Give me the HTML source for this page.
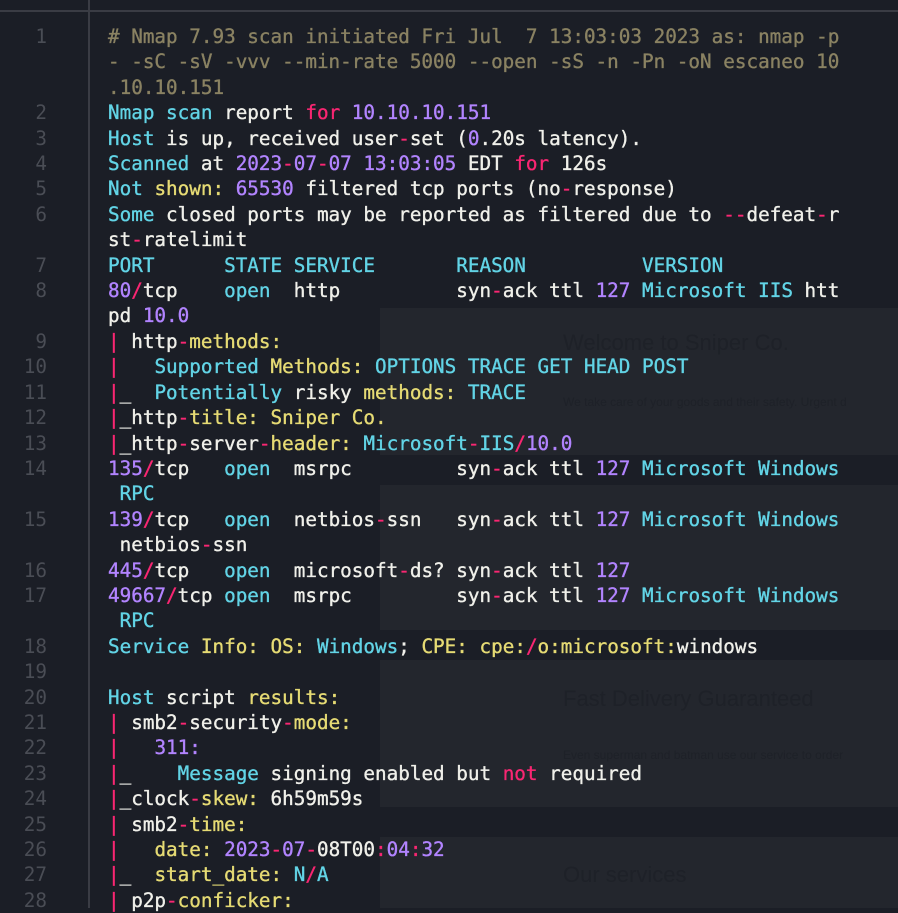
<!DOCTYPE html>
<html><head><meta charset="utf-8"><style>
html,body{margin:0;padding:0;width:898px;height:908px;overflow:hidden;background:#1b1e26}
.bg{position:absolute;left:380px;width:518px;background:#23262d}
.hl{position:absolute;left:0;top:10px;width:898px;height:2px;background:#3a3c44}
.vl{position:absolute;left:88px;top:0;width:2px;height:908px;background:#3a3c44}
.web{position:absolute;font-family:"Liberation Sans",sans-serif;color:#1e2128}
#g{position:absolute;left:0;top:24px;width:47px;text-align:right;font:19.3px/25.4px "DejaVu Sans Mono",monospace;color:#4a4d55;white-space:pre}
#c{position:absolute;left:108px;top:24px;font:19.3px/25.4px "DejaVu Sans Mono",monospace;color:#f0f0ea;white-space:pre;-webkit-text-stroke:0.35px currentColor}
.m{color:#8a8262}.c{color:#62d4e6}.p{color:#f92672}.v{color:#b284ff}.y{color:#e6db74}
</style></head><body>
<div class="bg" style="top:308px;height:147px"></div>
<div class="bg" style="top:485px;height:145px"></div>
<div class="bg" style="top:660px;height:147px"></div>
<div class="bg" style="top:837px;height:71px"></div>
<div class="web" style="left:563px;top:330px;font-size:22px">Welcome to Sniper Co.</div>
<div class="web" style="left:563px;top:395px;font-size:12px">We take care of your goods and their safety. Urgent d</div>
<div class="web" style="left:563px;top:686px;font-size:22px">Fast Delivery Guaranteed</div>
<div class="web" style="left:563px;top:748px;font-size:12px">Even superman and batman use our service to order</div>
<div class="web" style="left:563px;top:862px;font-size:22px">Our services</div>
<div class="hl"></div><div class="vl"></div>
<div id="g">1


2
3
4
5
6

7
8

9
10
11
12
13
14

15

16
17

18
19
20
21
22
23
24
25
26
27
28</div>
<div id="c"><span class="m"># Nmap 7.93 scan initiated Fri Jul  7 13:03:03 2023 as: nmap -p
- -sC -sV -vvv --min-rate 5000 --open -sS -n -Pn -oN escaneo 10
.10.10.151</span>
<span class="c">Nmap scan</span> report <span class="p">for</span> <span class="v">10.10.10.151</span>
<span class="c">Host</span> is up, received user<span class="p">-</span>set (<span class="v">0</span>.20s latency).
<span class="c">Scanned</span> at <span class="v">2023</span><span class="p">-</span><span class="v">07</span><span class="p">-</span><span class="v">07 13:03:05</span> EDT <span class="p">for</span> 126s
<span class="c">Not</span> <span class="y">shown:</span> <span class="v">65530</span> filtered tcp ports (no<span class="p">-</span>response)
<span class="c">Some</span> closed ports may be reported as filtered due to <span class="p">--</span>defeat<span class="p">-</span>r
st<span class="p">-</span>ratelimit
<span class="c">PORT      STATE SERVICE       REASON          VERSION</span>
<span class="v">80</span><span class="p">/</span>tcp    <span class="c">open</span>  http          syn<span class="p">-</span>ack ttl <span class="v">127</span> <span class="c">Microsoft IIS</span> htt
pd <span class="v">10.0</span>
<span class="p">|</span> http<span class="p">-</span><span class="y">methods:</span>
<span class="p">|</span>   <span class="c">Supported</span> <span class="y">Methods:</span> <span class="c">OPTIONS TRACE GET HEAD POST</span>
<span class="p">|</span>_  <span class="c">Potentially</span> risky <span class="y">methods:</span> <span class="c">TRACE</span>
<span class="p">|</span>_http<span class="p">-</span><span class="y">title: Sniper Co.</span>
<span class="p">|</span>_http<span class="p">-</span>server<span class="p">-</span><span class="y">header:</span> <span class="c">Microsoft</span><span class="p">-</span><span class="c">IIS</span><span class="p">/</span><span class="v">10.0</span>
<span class="v">135</span><span class="p">/</span>tcp   <span class="c">open</span>  msrpc         syn<span class="p">-</span>ack ttl <span class="v">127</span> <span class="c">Microsoft Windows</span>
 <span class="c">RPC</span>
<span class="v">139</span><span class="p">/</span>tcp   <span class="c">open</span>  netbios<span class="p">-</span>ssn   syn<span class="p">-</span>ack ttl <span class="v">127</span> <span class="c">Microsoft Windows</span>
 netbios<span class="p">-</span>ssn
<span class="v">445</span><span class="p">/</span>tcp   <span class="c">open</span>  microsoft<span class="p">-</span>ds? syn<span class="p">-</span>ack ttl <span class="v">127</span>
<span class="v">49667</span><span class="p">/</span>tcp <span class="c">open</span>  msrpc         syn<span class="p">-</span>ack ttl <span class="v">127</span> <span class="c">Microsoft Windows</span>
 <span class="c">RPC</span>
<span class="c">Service</span> <span class="y">Info: OS:</span> <span class="c">Windows</span>; <span class="y">CPE: cpe:</span><span class="p">/</span><span class="y">o:microsoft:</span>windows

<span class="c">Host</span> script <span class="y">results:</span>
<span class="p">|</span> smb2<span class="p">-</span>security<span class="p">-</span><span class="y">mode:</span>
<span class="p">|</span>   <span class="v">311:</span>
<span class="p">|</span>_    <span class="c">Message</span> signing enabled but <span class="p">not</span> required
<span class="p">|</span>_clock<span class="p">-</span><span class="y">skew:</span> 6h59m59s
<span class="p">|</span> smb2<span class="p">-</span><span class="y">time:</span>
<span class="p">|</span>   <span class="y">date:</span> <span class="v">2023</span><span class="p">-</span><span class="v">07</span><span class="p">-</span>08T00<span class="p">:</span><span class="v">04</span><span class="p">:</span><span class="v">32</span>
<span class="p">|</span>_  <span class="y">start_date:</span> <span class="c">N</span><span class="p">/</span><span class="c">A</span>
<span class="p">|</span> p2p<span class="p">-</span><span class="y">conficker:</span></div>
</body></html>
